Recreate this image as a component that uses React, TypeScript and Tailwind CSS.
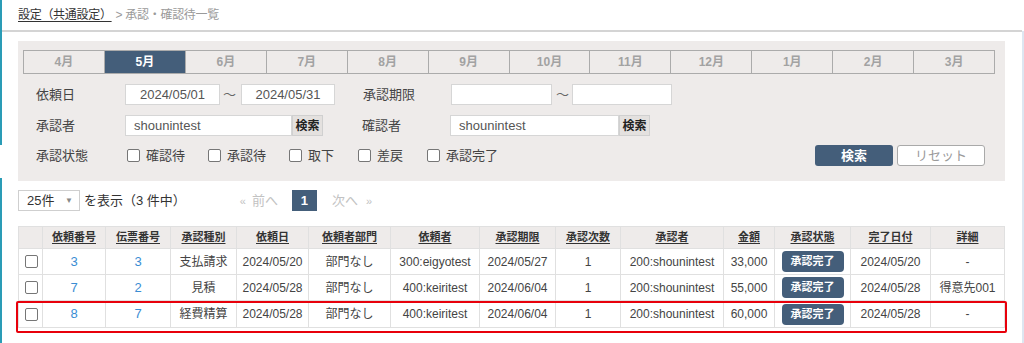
import React from 'react'

const MONTHS = ['4月', '5月', '6月', '7月', '8月', '9月', '10月', '11月', '12月', '1月', '2月', '3月']

const COLS: [string, number][] = [
  ['', 24],
  ['依頼番号', 63],
  ['伝票番号', 65],
  ['承認種別', 66],
  ['依頼日', 72],
  ['依頼者部門', 82],
  ['依頼者', 89],
  ['承認期限', 76],
  ['承認次数', 65],
  ['承認者', 103],
  ['金額', 51],
  ['承認状態', 76],
  ['完了日付', 80],
  ['詳細', 74],
]

const ROWS = [
  { no: '3', slip: '3', kind: '支払請求', date: '2024/05/20', dept: '部門なし', req: '300:eigyotest', due: '2024/05/27', times: '1', app: '200:shounintest', amt: '33,000', done: '2024/05/20', detail: '-' },
  { no: '7', slip: '2', kind: '見積', date: '2024/05/28', dept: '部門なし', req: '400:keiritest', due: '2024/06/04', times: '1', app: '200:shounintest', amt: '55,000', done: '2024/05/28', detail: '得意先001' },
  { no: '8', slip: '7', kind: '経費精算', date: '2024/05/28', dept: '部門なし', req: '400:keiritest', due: '2024/06/04', times: '1', app: '200:shounintest', amt: '60,000', done: '2024/05/28', detail: '-' },
]

const STATUS = [
  ['確認待', 'w-[81px]'],
  ['承認待', 'w-[81px]'],
  ['取下', 'w-[69px]'],
  ['差戻', 'w-[69px]'],
  ['承認完了', 'w-[80px]'],
]

function Box() {
  return <span className="inline-block h-[13px] w-[13px] shrink-0 rounded-[2px] border border-[#767676] bg-white" />
}

function TextInput({ value, w, center }: { value: string; w: string; center?: boolean }) {
  return (
    <div
      className={`flex h-[21px] ${w} items-center border border-[#d6d6d6] bg-white text-[13px] text-[#555] ${
        center ? 'justify-center' : 'pl-[8px]'
      }`}
    >
      {value}
    </div>
  )
}

function SmallSearch() {
  return (
    <div className="flex h-[21px] w-[31px] items-center justify-center border border-[#d0d0d0] bg-[#e4e1df] text-[12px] font-bold text-[#222]">
      検索
    </div>
  )
}

export default function App() {
  return (
    <div className="relative h-[343px] w-[1024px] overflow-hidden bg-white font-['Liberation_Sans','Noto_Sans_CJK_JP',sans-serif] text-[#444]">
      {/* edge decorations from the surrounding frame */}
      <div className="absolute left-0 top-0 h-[145px] w-[2px] bg-[#2a9cb6]" />
      <div className="absolute left-0 top-[178px] h-[165px] w-[2px] bg-[#2a9cb6]" />
      <div className="absolute right-0 top-[31px] h-[312px] w-[2px] bg-[#dde6f1]" />

      <div className="mr-[2px] flex h-[32px] items-start border-b-2 border-[#d4d4d4] pl-[18px] pt-[6px] text-[12px]">
        <span className="tracking-[-0.3px] text-[#333] underline underline-offset-2">設定（共通設定）</span>
        <span className="ml-[4px] tracking-[-0.3px] text-[#9a9a9a]">&gt; 承認・確認待一覧</span>
      </div>

      <div className="w-[1005px] pl-[18px] pt-[9px]">
        <div className="bg-[#eeebea] px-[5px] pb-[15px] pt-[9px]">
          <div className="flex w-[972px] border border-[#ababab]">
            {MONTHS.map((m, i) => (
              <div
                key={m}
                className={`flex h-[22px] flex-1 items-center justify-center text-[12px] font-bold ${
                  i > 0 ? 'border-l border-[#ababab]' : ''
                } ${i === 1 ? 'bg-[#445e7a] text-white' : 'text-[#a2a2a2]'}`}
              >
                {m}
              </div>
            ))}
          </div>

          <div className="mt-[10px] flex h-[21px] items-center text-[13px] text-[#444]">
            <span className="w-[102px] pl-[13px]">依頼日</span>
            <TextInput value="2024/05/01" w="w-[95px]" center />
            <span className="w-[21px] pl-[3px] text-[#666]">〜</span>
            <TextInput value="2024/05/31" w="w-[94px]" center />
            <span className="ml-[28px] w-[88px]">承認期限</span>
            <TextInput value="" w="w-[101px]" />
            <span className="w-[20px] pl-[4px] text-[#666]">〜</span>
            <TextInput value="" w="w-[100px]" />
          </div>

          <div className="mt-[10px] flex h-[21px] items-center text-[13px] text-[#444]">
            <span className="w-[102px] pl-[13px]">承認者</span>
            <TextInput value="shounintest" w="w-[167px]" />
            <SmallSearch />
            <span className="ml-[39px] w-[88px]">確認者</span>
            <TextInput value="shounintest" w="w-[169px]" />
            <SmallSearch />
          </div>

          <div className="mt-[9px] flex h-[21px] items-center text-[13px] text-[#444]">
            <span className="w-[104px] pl-[13px]">承認状態</span>
            {STATUS.map(([label, w]) => (
              <span key={label} className={`flex items-center gap-[6px] ${w}`}>
                <Box />
                <span>{label}</span>
              </span>
            ))}
            <div className="ml-auto mr-[15px] flex gap-[4px]">
              <div className="flex h-[21px] w-[78px] items-center justify-center rounded-[3px] bg-[#445e7a] text-[13px] font-bold text-white">
                検索
              </div>
              <div className="flex h-[21px] w-[88px] items-center justify-center rounded-[3px] border border-[#a9a9a9] bg-white text-[13px] text-[#9a9a9a]">
                リセット
              </div>
            </div>
          </div>
        </div>

        <div className="mt-[9px] flex h-[21px] items-center text-[13px]">
          <div className="flex h-[21px] w-[62px] items-center justify-between border border-[#cfcfcf] bg-white pl-[8px] pr-[6px] text-[#333]">
            <span>25件</span>
            <span className="text-[8px] text-[#888]">▼</span>
          </div>
          <span className="ml-[4px] text-[#333]">を表示（3 件中）</span>
          <span className="ml-[54px] text-[#c2c2c2]">
            <span className="text-[11px]">«</span>
            <span className="ml-[6px]">前へ</span>
          </span>
          <div className="ml-[14px] flex h-[21px] w-[25px] items-center justify-center bg-[#445e7a] font-bold text-white">1</div>
          <span className="ml-[15px] text-[#c2c2c2]">
            <span>次へ</span>
            <span className="ml-[8px] text-[11px]">»</span>
          </span>
        </div>

        <div className="relative mt-[15px]">
          <table className="w-[986px] table-fixed border-collapse text-[12px]">
            <colgroup>
              {COLS.map(([h, w], i) => (
                <col key={i} style={{ width: w }} />
              ))}
            </colgroup>
            <thead>
              <tr className="h-[22px] bg-[#eeebea]">
                {COLS.map(([h], i) => (
                  <th key={i} className="border border-[#e0e0e0] text-[11px] font-bold text-[#333]">
                    {h && <span className="underline underline-offset-2">{h}</span>}
                  </th>
                ))}
              </tr>
            </thead>
            <tbody>
              {ROWS.map((r, idx) => (
                <tr key={r.no} className={idx === 2 ? 'h-[27px]' : 'h-[26px]'}>
                  <td className="border border-[#e0e0e0] pl-[6px]">
                    <div className="flex">
                      <Box />
                    </div>
                  </td>
                  <td className="border border-[#e0e0e0] text-center text-[13px] text-[#3a8dd3]">{r.no}</td>
                  <td className="border border-[#e0e0e0] text-center text-[13px] text-[#3a8dd3]">{r.slip}</td>
                  <td className="border border-[#e0e0e0] text-center">{r.kind}</td>
                  <td className="border border-[#e0e0e0] text-center">{r.date}</td>
                  <td className="border border-[#e0e0e0] text-center">{r.dept}</td>
                  <td className="border border-[#e0e0e0] text-center">{r.req}</td>
                  <td className="border border-[#e0e0e0] text-center">{r.due}</td>
                  <td className="border border-[#e0e0e0] text-center">{r.times}</td>
                  <td className="border border-[#e0e0e0] text-center">{r.app}</td>
                  <td className="border border-[#e0e0e0] text-center">{r.amt}</td>
                  <td className="border border-[#e0e0e0] text-center">
                    <span className="inline-flex h-[21px] w-[62px] items-center justify-center rounded-[4px] bg-[#445e7a] text-[11px] font-bold text-white">
                      承認完了
                    </span>
                  </td>
                  <td className="border border-[#e0e0e0] text-center">{r.done}</td>
                  <td className="border border-[#e0e0e0] text-center">{r.detail}</td>
                </tr>
              ))}
            </tbody>
          </table>
          <div className="pointer-events-none absolute left-[-2px] top-[75px] h-[32px] w-[991px] rounded-[2px] border-2 border-[#e8000b]" />
        </div>
      </div>
    </div>
  )
}
